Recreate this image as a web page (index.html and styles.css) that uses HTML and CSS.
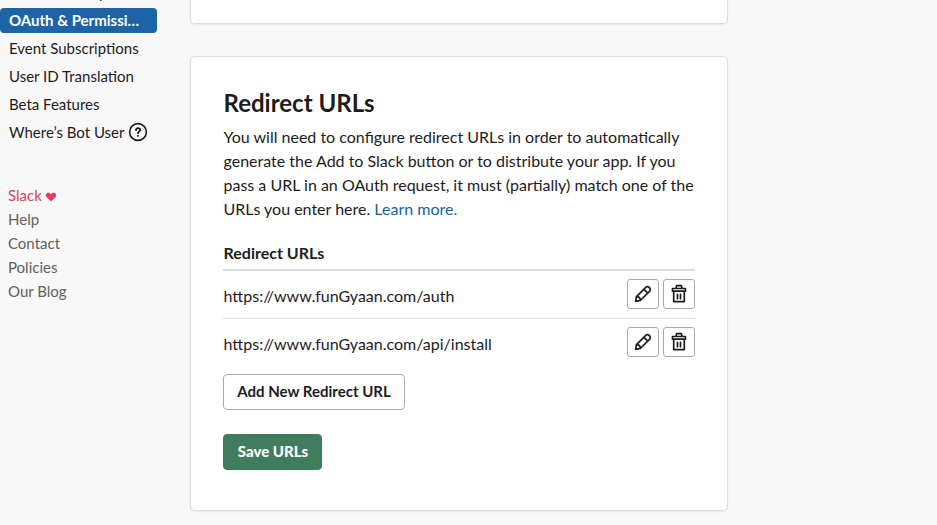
FILE: index.html
```html
<!DOCTYPE html>
<html lang="en">
<head>
<meta charset="utf-8">
<title>OAuth &amp; Permissions</title>
<link rel="stylesheet" href="styles.css">
</head>
<body>
<div class="page">
  <aside class="sidebar">
    <nav class="menu">
      <a class="item">Workflow Steps</a>
      <a class="item active">OAuth &amp; Permissi…</a>
      <a class="item">Event Subscriptions</a>
      <a class="item">User ID Translation</a>
      <a class="item">Beta Features</a>
      <a class="item">Where’s Bot User
        <svg class="help" viewBox="0 0 20 20" fill="none" stroke="currentColor" stroke-width="1.6" stroke-linecap="round"><circle cx="10" cy="10" r="8.4"/><path d="M8 8.200c0-1.200.9-2 2-2s2.100.7 2.100 1.900c0 1.500-2.100 1.600-2.100 3.100" stroke-width="1.800"/><path d="M10 13.800v.1" stroke-width="1.900"/></svg></a>
    </nav>
    <div class="links">
      <a class="slack">Slack <svg class="heart" viewBox="0 0 12 11" fill="currentColor"><path d="M6 10.500 1.200 5.700C-.3 4.100.2 1 2.900.7 4.300.6 5.400 1.300 6 2.300 6.600 1.300 7.700.6 9.100.7 11.800 1 12.300 4.100 10.800 5.700Z"/></svg></a>
      <a>Help</a><a>Contact</a><a>Policies</a><a>Our Blog</a>
    </div>
  </aside>
  <main class="content">
    <section class="card previous"></section>
    <section class="card">
      <h2>Redirect URLs</h2>
      <p>You will need to configure redirect URLs in order to automatically<br>generate the Add to Slack button or to distribute your app. If you<br>pass a URL in an OAuth request, it must (partially) match one of the<br>URLs you enter here. <a class="learn">Learn more.</a></p>
      <div class="table-head">Redirect URLs</div>
      <div class="row"><span>https://www.funGyaan.com/auth</span>
        <button class="icon"><svg viewBox="0 0 20 20"><use href="#pencil"/></svg></button><button class="icon"><svg viewBox="0 0 20 20"><use href="#trash"/></svg></button></div>
      <div class="row"><span>https://www.funGyaan.com/api/install</span>
        <button class="icon"><svg viewBox="0 0 20 20"><use href="#pencil"/></svg></button><button class="icon"><svg viewBox="0 0 20 20"><use href="#trash"/></svg></button></div>
      <button class="btn">Add New Redirect URL</button>
      <button class="btn save">Save URLs</button>
    </section>
  </main>
</div>
<svg class="defs"><defs>
  <g id="pencil"><path d="m2.600 17.400.9-4.700 8.800-8.900c1.600-1.600 3-1.300 4.100-.2s1.400 2.500-.2 4.100l-8.900 8.800ZM11 5.300l3.700 3.700M3.700 12.700c2.100.1 3.500 1.500 3.600 3.600"/></g>
  <g id="trash"><path d="M3.500 4.500h13v2.600h-13zM7 4.300l.6-2.600h4.800l.6 2.600M4.700 7.500v10.100h10.600V7.500M8.500 10.300v4.400M11.500 10.300v4.400"/></g>
</defs></svg>
</body>
</html>
```
FILE: styles.css
```css
* { box-sizing: border-box; }
body { margin: 0; height: 525px; overflow: hidden; background: #f8f8f8; color: #1d1c1d; font: 15px/24px Lato, sans-serif; }
.page { display: flex; height: 525px; }
.sidebar { width: 190px; flex: none; }
.menu { margin-top: -20px; width: 157px; }
.item { display: flex; align-items: center; height: 25px; margin-bottom: 3px; padding: 0 0 1px 9px; white-space: nowrap; }
.active { background: #1c64a5; color: #fff; font-weight: 700; border-radius: 4px; }
.help { width: 20px; height: 20px; margin-left: 3.5px; }
.links { margin: 38px 0 0 8px; color: #616061; }
.links a { display: block; }
.links .slack { color: #e0405f; }
.heart { width: 12px; height: 10px; margin-left: -1px; vertical-align: -1px; }
.content { width: 538px; font-size: 16px; }
.card { height: 455px; padding: 32px; background: #fff; border: 1px solid #ddd; border-radius: 5px; box-shadow: 0 1px 2px #0001; }
.previous { height: 44px; padding: 0; margin: -20px 0 32px; }
h2 { margin: 0; padding-left: .5px; font-size: 24px; line-height: 28px; font-weight: 700; }
p { margin: 8px 0 20px; padding-left: .5px; white-space: nowrap; }
.learn { color: #1264a3; }
.table-head { height: 30px; padding-left: .5px; font-weight: 700; border-bottom: 2px solid #ddd; }
.row { display: flex; align-items: center; gap: 4px; height: 48px; border-bottom: 1px solid #ddd; }
.row + .row { border-color: transparent; }
.row span { flex: 1; padding: 2px 0 0 .5px; }
button { font: inherit; color: #1d1c1d; }
.icon { width: 32px; height: 30px; margin-bottom: 2px; padding: 0; background: #fff; border: 1px solid #aaa; border-radius: 3px; }
.icon svg { display: block; margin: auto; width: 20px; height: 20px; fill: none; stroke: #1d1c1d; stroke-width: 1.7; stroke-linecap: round; stroke-linejoin: round; }
.btn { display: block; height: 36px; width: 182px; margin-top: 7px; padding: 0 0 2px; background: #fff; border: 1px solid #aaa; border-radius: 4px; font-size: 15px; font-weight: 700; }
.save { width: 99px; margin-top: 24px; padding-left: 1px; background: #407d5c; border-color: #407d5c; color: #fff; font-weight: 900; }
.defs { position: absolute; width: 0; height: 0; }
```
